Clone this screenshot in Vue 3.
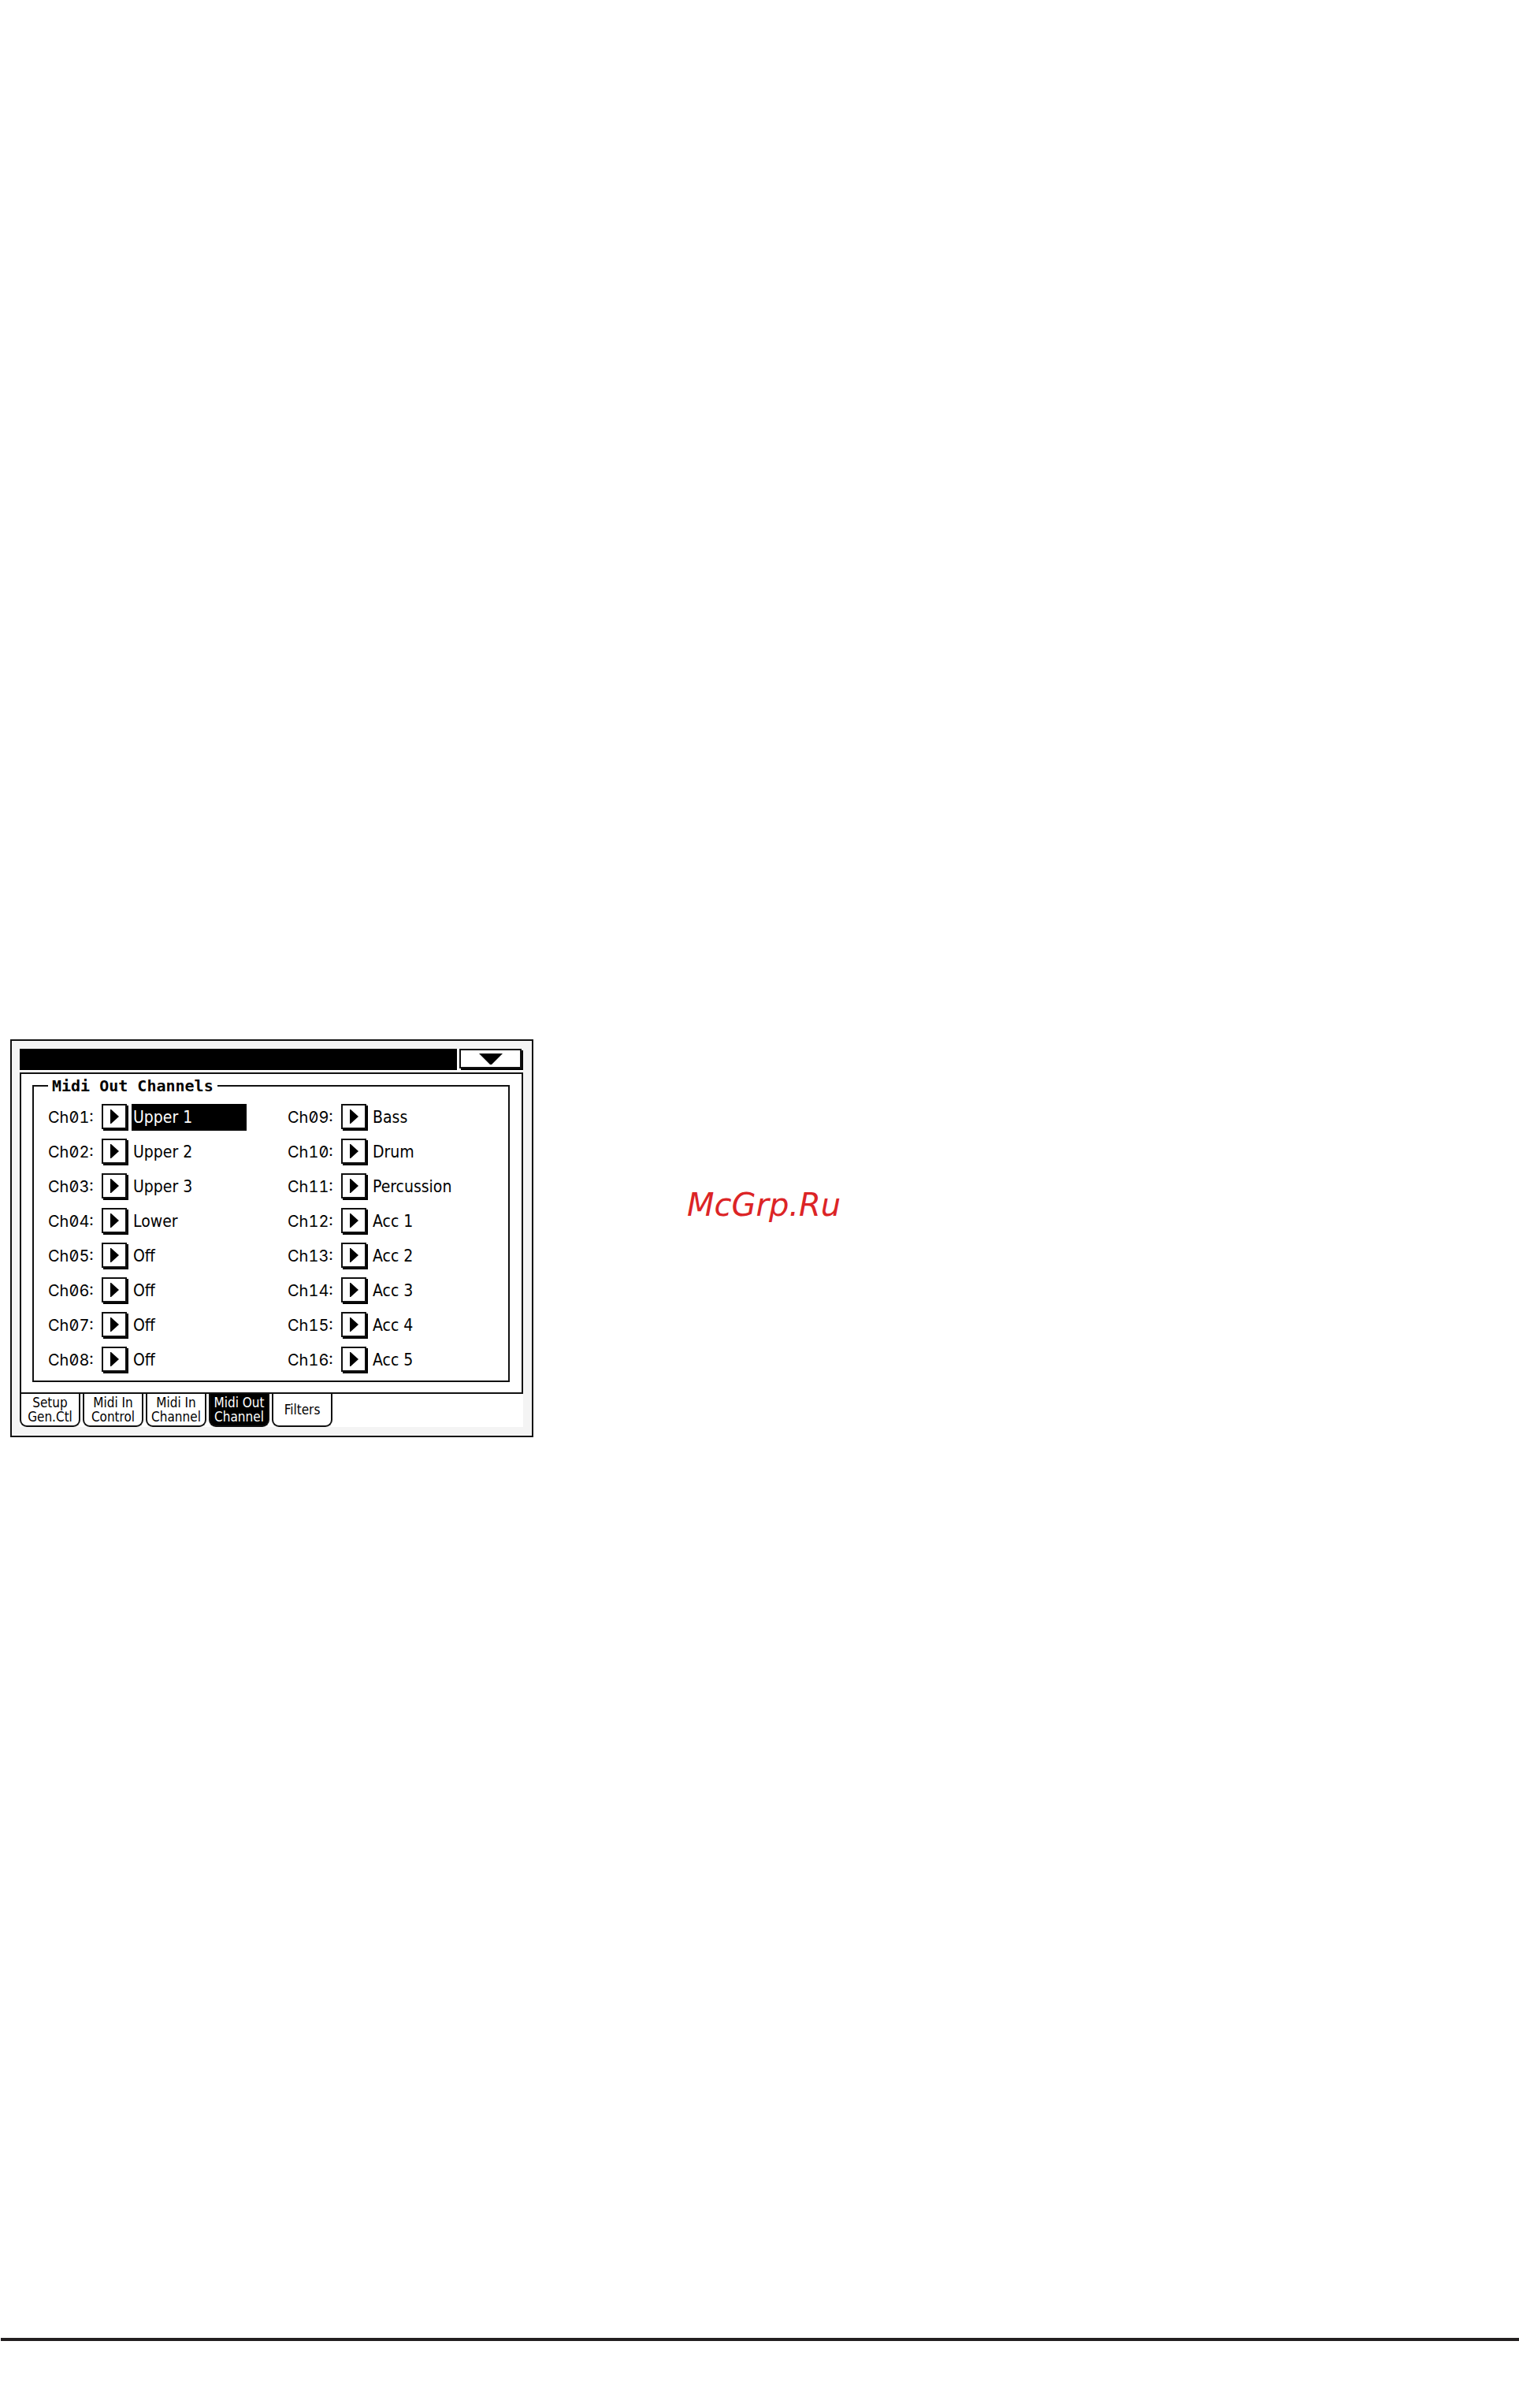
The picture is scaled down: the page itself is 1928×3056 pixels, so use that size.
<template>
  <div class="page">
    <main class="content">
      <section class="device" aria-label="Midi settings">
        <header class="titlebar">
          <div class="titlebar-text"></div>
          <button class="menu-btn" type="button" aria-label="Page menu">
            <svg width="30" height="15" viewBox="0 0 30 15">
              <path d="M0 0H30L16 14H14Z" />
            </svg>
          </button>
        </header>

        <div class="panel">
          <fieldset class="group">
            <legend>Midi Out Channels</legend>
            <div class="columns">
              <div v-for="(column, i) in columns" :key="i" class="column">
                <div v-for="ch in column" :key="ch.id" class="row">
                  <label class="row-label" :for="'ch' + ch.id">Ch{{ ch.id }}:</label>
                  <button :id="'ch' + ch.id" class="play-btn" type="button" @click="selected = ch.id">
                    <svg width="11" height="18" viewBox="0 0 11 18">
                      <path d="M0 0H1L11 9L1 18H0Z" />
                    </svg>
                  </button>
                  <span class="value" :class="{ 'value--selected': selected === ch.id }">{{ ch.track }}</span>
                </div>
              </div>
            </div>
          </fieldset>
        </div>

        <nav class="tabs">
          <button
            v-for="(tab, i) in tabs"
            :key="i"
            type="button"
            class="tab"
            :class="{ 'tab--active': activeTab === i }"
            @click="activeTab = i"
          >
            <span v-for="line in tab" :key="line">{{ line }}</span>
          </button>
        </nav>
      </section>

      <p class="site">McGrp.Ru</p>
    </main>

    <hr class="rule" />
  </div>
</template>

<script setup>
import { ref } from 'vue';

const tracks = [
  'Upper 1', 'Upper 2', 'Upper 3', 'Lower', 'Off', 'Off', 'Off', 'Off',
  'Bass', 'Drum', 'Percussion', 'Acc 1', 'Acc 2', 'Acc 3', 'Acc 4', 'Acc 5',
];

const channels = tracks.map((track, i) => ({
  id: String(i + 1).padStart(2, '0'),
  track,
}));
const columns = [channels.slice(0, 8), channels.slice(8)];

const tabs = [
  ['Setup', 'Gen.Ctl'],
  ['Midi In', 'Control'],
  ['Midi In', 'Channel'],
  ['Midi Out', 'Channel'],
  ['Filters'],
];

const selected = ref('01');
const activeTab = ref(3);
</script>

<style>
body {
  margin: 0;
  background: #fff;
}
</style>

<style scoped>
.page {
  display: flex;
  flex-direction: column;
  min-height: 100vh;
  box-sizing: border-box;
  padding-bottom: 85px;
  color: #000;
  font-family: "DejaVu Sans Condensed", "DejaVu Sans", sans-serif;
}

.content {
  display: flex;
  align-items: flex-start;
  gap: 195px;
  padding: 1319px 13px 0;
}

.device {
  box-sizing: border-box;
  flex: 0 1 664px;
  padding: 10px 11px 11px 10px;
  border: 2px solid #111;
  background: linear-gradient(#fff, #fff) content-box, #f4f4f4;
}

.titlebar {
  display: flex;
  gap: 3px;
  height: 27px;
  margin-bottom: 3px;
}

.titlebar-text {
  flex: 1;
  background: #000;
}

.menu-btn {
  display: flex;
  justify-content: center;
  box-sizing: border-box;
  width: 79px;
  height: 25px;
  margin-right: 2px;
  padding: 4px 0 0;
  border: 2px solid #111;
  background: #fff;
  box-shadow: 2px 2px 0 #000;
}

.panel {
  padding: 3px 15px 13px 14px;
  border: 2px solid #111;
  background: #fff;
}

.group {
  margin: 0;
  padding: 11px 0 9px 18px;
  border: 2px solid #111;
}

.group legend {
  padding: 0 5px;
  font: bold 20px/24px "DejaVu Sans Mono", monospace;
}

.columns {
  display: grid;
  grid-template-columns: 304px 1fr;
}

.column {
  display: flex;
  flex-direction: column;
  gap: 10px;
}

.row {
  display: flex;
  height: 34px;
  font-size: 21px;
  line-height: 34px;
}

.row-label {
  width: 68px;
  font-family: Inter, sans-serif;
  font-size: 20px;
  font-feature-settings: "zero", "tnum";
}

.play-btn {
  display: flex;
  align-items: center;
  justify-content: center;
  box-sizing: border-box;
  width: 32px;
  height: 32px;
  margin-right: 6px;
  padding: 0;
  border: 2px solid #111;
  background: #fff;
  box-shadow: 2px 2px 0 #000;
}

.value {
  box-sizing: border-box;
  width: 146px;
  padding-left: 2px;
}

.value--selected {
  background: #000;
  color: #fff;
}

.tabs {
  display: flex;
  gap: 3px;
}

.tab {
  display: flex;
  flex-direction: column;
  align-items: center;
  justify-content: center;
  box-sizing: border-box;
  width: 77px;
  height: 42px;
  padding: 0;
  border: 2px solid #111;
  border-top: 0;
  border-radius: 0 0 9px 9px;
  background: #fff;
  color: #000;
  font: 17px/18px "DejaVu Sans Condensed", "DejaVu Sans", sans-serif;
  white-space: nowrap;
}

.tab--active {
  background: #000;
  color: #fff;
}

.site {
  margin: 186px 0 0;
  color: #dc2426;
  font: italic 40px/48px "DejaVu Sans", sans-serif;
}

.rule {
  width: calc(100% - 1px);
  height: 4px;
  margin: auto 0 0 1px;
  border: 0;
  background: #231f20;
}
</style>
